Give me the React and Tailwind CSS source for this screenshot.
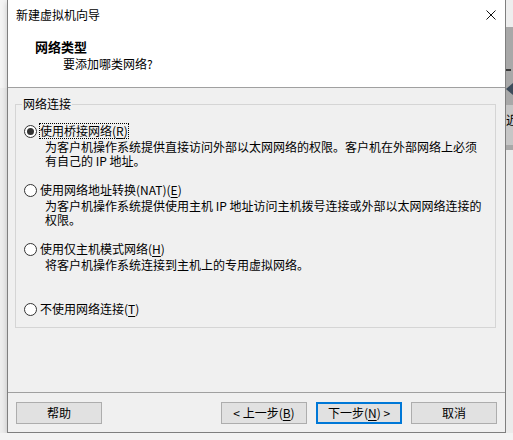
import React from 'react';

// 向导对话框：网络类型
const Key = ({ children }) => <span className="underline underline-offset-[2px]">{children}</span>;

const Radio = ({ checked }) => (
  <span className="w-[13px] h-[13px] rounded-full border border-[#333333] bg-white flex items-center justify-center shrink-0">
    {checked && <span className="w-[7px] h-[7px] rounded-full bg-[#333333]" />}
  </span>
);

const Option = ({ checked, focused, label, k, tail, lines, className }) => (
  <div className={className}>
    <div className="h-[16px] flex items-center pl-[8px] gap-[2px]">
      <Radio checked={checked} />
      <span className={focused ? 'border border-dotted border-black leading-[14px] whitespace-nowrap' : 'border border-transparent leading-[14px] whitespace-nowrap'}>
        {label}(<Key>{k}</Key>){tail}
      </span>
    </div>
    {lines && (
      <div className="mt-[1px] pl-[29px] leading-[14px]">
        {lines.map((l) => (
          <div key={l} className="whitespace-nowrap">{l}</div>
        ))}
      </div>
    )}
  </div>
);

const Btn = ({ children, primary }) => (
  <div
    className={
      primary
        ? 'w-[86px] h-[22px] flex items-center justify-center bg-[#e1e1e1] border-2 border-[#0078d7] whitespace-nowrap'
        : 'w-[86px] h-[22px] flex items-center justify-center bg-[#e1e1e1] border border-[#adadad] whitespace-nowrap'
    }
  >
    {children}
  </div>
);

export default function App() {
  return (
    <div className="w-[513px] h-[440px] overflow-hidden bg-[#f0f0f0] flex flex-col text-black text-[12px] font-['Noto_Sans_CJK_SC','Liberation_Sans',sans-serif]">
      <div className="flex h-[433px]">
        {/* 左侧背景 */}
        <div className="w-[7px] flex flex-col">
          <div className="h-[88px] bg-[#f4f4f4]" />
          <div className="flex-1 bg-[#ededed]" />
        </div>

        {/* 窗口 */}
        <div className="w-[499px] h-[433px] flex flex-col border-l border-r border-b border-[#7f7f7f] bg-[#f0f0f0] shadow-[0_2px_6px_rgba(0,0,0,0.2)]">
          <div className="h-[88px] bg-white border-b border-[#a0a0a0] flex flex-col">
            <div className="h-[30px] flex items-center justify-between pl-[8px] pr-[9px]">
              <span className="leading-[14px]">新建虚拟机向导</span>
              <svg width="10" height="10" viewBox="0 0 10 10">
                <path d="M0.5 0.5 L9.5 9.5 M9.5 0.5 L0.5 9.5" stroke="#111" strokeWidth="1" fill="none" />
              </svg>
            </div>
            <div className="mt-[10px] pl-[27px] leading-[14px] text-[13px] font-bold">网络类型</div>
            <div className="mt-[3px] pl-[55px] leading-[14px]">要添加哪类网络?</div>
          </div>

          <div className="flex-1">
            <div className="relative ml-[7px] mt-[16px] w-[481px] h-[224px] border border-[#d5d5d5] pt-[18px]">
              <span className="absolute top-[-8px] left-[6px] px-[1px] bg-[#f0f0f0] leading-[14px]">网络连接</span>
              <Option
                checked
                focused
                label="使用桥接网络"
                k="R"
                lines={[
                  '为客户机操作系统提供直接访问外部以太网网络的权限。客户机在外部网络上必须',
                  '有自己的 IP 地址。',
                ]}
              />
              <Option
                className="mt-[14px]"
                label="使用网络地址转换(NAT)"
                k="E"
                lines={[
                  '为客户机操作系统提供使用主机 IP 地址访问主机拨号连接或外部以太网网络连接的',
                  '权限。',
                ]}
              />
              <Option
                className="mt-[14px]"
                label="使用仅主机模式网络"
                k="H"
                lines={['将客户机操作系统连接到主机上的专用虚拟网络。']}
              />
              <Option className="mt-[29px]" label="不使用网络连接" k="T" />
            </div>
          </div>

          <div className="h-[40px] border-t border-[#a0a0a0] pt-[9px] px-[8px] flex justify-between items-start">
            <Btn>帮助</Btn>
            <div className="flex gap-[9px]">
              <Btn>&lt; 上一步(<Key>B</Key>)</Btn>
              <Btn primary>下一步(<Key>N</Key>) &gt;</Btn>
              <Btn>取消</Btn>
            </div>
          </div>
        </div>

        {/* 右侧背景 */}
        <div className="w-[7px] flex flex-col overflow-hidden">
          <div className="h-[27px] bg-[#eeeeee]" />
          <div className="h-[123px] bg-[#a8a8a8] flex flex-col">
            <div className="mt-[42px] w-[5px] h-[2px] bg-[#3a3a3a]" />
            <svg className="mt-[12px]" width="7" height="12" viewBox="0 0 7 12">
              <polygon points="7,0 0,6 7,12" fill="#3d4b5a" />
            </svg>
            <div className="mt-[10px] h-[40px] bg-[#c6c6c6] leading-[14px] pt-[8px] whitespace-nowrap">近</div>
          </div>
          <div className="flex-1 bg-[#ebebeb]" />
        </div>
      </div>
      <div className="h-[7px] bg-[#f3f3f3]" />
    </div>
  );
}
